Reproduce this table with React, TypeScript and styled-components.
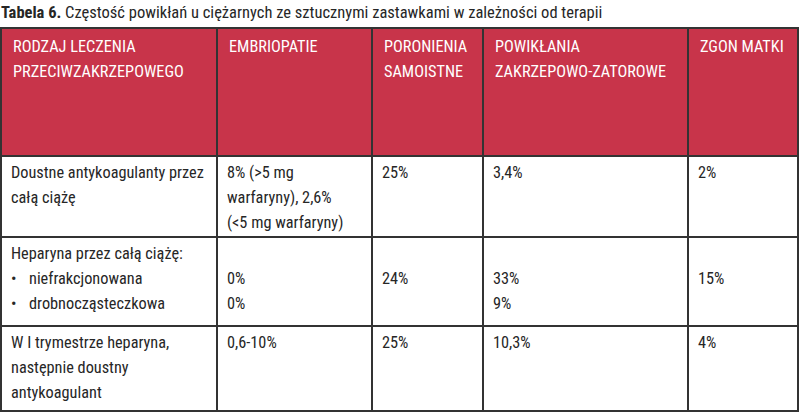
import React from "react";
import styled, { createGlobalStyle } from "styled-components";

const Global = createGlobalStyle`
  html, body { margin: 0; padding: 0; background: #fff; }
  body {
    font-family: "Roboto Condensed", "Noto Sans Display", "Liberation Sans", sans-serif;
  }
`;

const Page = styled.div`
  width: 800px;
  height: 420px;
  color: #262626;
`;

const Title = styled.div`
  font-size: 16.5px;
  line-height: 20px;
  height: 27px;
  padding: 3px 0 0 1px;
  box-sizing: border-box;
  white-space: nowrap;
  b { font-weight: bold; }
`;

const Table = styled.table`
  border-collapse: collapse;
  width: 799px;
  table-layout: fixed;
  line-height: 25px;
  font-size: 16.3px;
`;

const Th = styled.th<{ $w?: number }>`
  ${(p) => (p.$w ? `width: ${p.$w}px;` : "")}
  background: #c8344a;
  color: #fff;
  font-weight: 400;
  text-align: left;
  vertical-align: top;
  border: 2px solid #333;
  padding: 5px 8px 0 11px;
  height: 128px;
  box-sizing: border-box;
`;

const Row = styled.tr<{ $h: number }>`
  height: ${(p) => p.$h}px;
`;

const Td = styled.td`
  vertical-align: top;
  border: 2px solid #333;
  padding: 3px 10px 0 9px;
  box-sizing: border-box;
`;

const Bullet = styled.div`
  display: flex;
  &::before {
    content: "•";
    width: 18px;
    flex: none;
  }
`;

export default function App() {
  return (
    <Page>
      <Global />
      <Title>
        <b>Tabela 6.</b> Częstość powikłań u ciężarnych ze sztucznymi zastawkami w zależności od terapii
      </Title>
      <Table>
        <thead>
          <tr>
            <Th $w={216}>RODZAJ LECZENIA PRZECIWZAKRZEPOWEGO</Th>
            <Th $w={155}>EMBRIOPATIE</Th>
            <Th $w={111}>PORONIENIA SAMOISTNE</Th>
            <Th $w={205}>POWIKŁANIA ZAKRZEPOWO-ZATOROWE</Th>
            <Th>ZGON MATKI</Th>
          </tr>
        </thead>
        <tbody>
          <Row $h={81}>
            <Td>Doustne antykoagulanty przez całą ciążę</Td>
            <Td>8% (&gt;5 mg warfaryny), 2,6% (&lt;5&nbsp;mg warfaryny)</Td>
            <Td>25%</Td>
            <Td>3,4%</Td>
            <Td>2%</Td>
          </Row>
          <Row $h={89}>
            <Td>
              Heparyna przez całą ciążę:
              <Bullet>niefrakcjonowana</Bullet>
              <Bullet>drobnocząsteczkowa</Bullet>
            </Td>
            <Td>
              <br />0%<br />0%
            </Td>
            <Td>
              <br />24%
            </Td>
            <Td>
              <br />33%<br />9%
            </Td>
            <Td>
              <br />15%
            </Td>
          </Row>
          <Row $h={85}>
            <Td>W I trymestrze heparyna, następnie doustny antykoagulant</Td>
            <Td>0,6-10%</Td>
            <Td>25%</Td>
            <Td>10,3%</Td>
            <Td>4%</Td>
          </Row>
        </tbody>
      </Table>
    </Page>
  );
}
